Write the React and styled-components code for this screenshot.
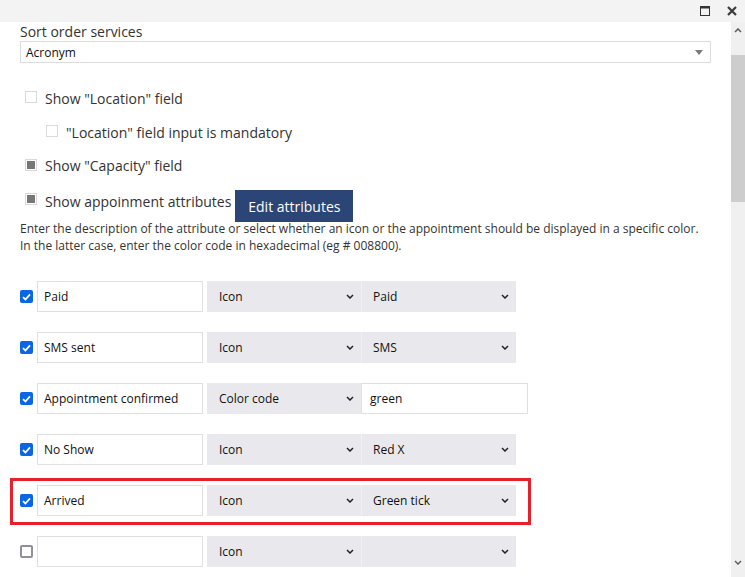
import React from 'react';
import styled, { createGlobalStyle } from 'styled-components';

const GlobalStyle = createGlobalStyle`
  html, body { margin: 0; padding: 0; background: #fff; }
  body { font-family: "Open Sans", "Liberation Sans", sans-serif; }
  * { box-sizing: border-box; }
`;

const Window = styled.div`
  width: 745px;
  height: 577px;
  display: flex;
  flex-direction: column;
  overflow: hidden;
  background: #fff;
`;

const TitleBar = styled.div`
  height: 22px;
  flex-shrink: 0;
  background: #f3f3f3;
  display: flex;
  justify-content: flex-end;
  align-items: center;
  gap: 17px;
  padding-right: 8px;
`;

const WinIcon = styled.svg`
  display: block;
  width: 10px;
  height: 10px;
`;

const Body = styled.div`
  flex: 1;
  min-height: 0;
  display: flex;
`;

const Content = styled.div`
  flex: 1;
  padding: 0 20px;
  overflow: hidden;
  color: #333;
`;

const FieldLabel = styled.div`
  font-size: 14px;
  line-height: 19px;
  color: #333;
`;

const SortSelect = styled.div`
  height: 22px;
  border: 1px solid #dcdcdc;
  display: flex;
  align-items: center;
  justify-content: space-between;
  padding: 0 7px 0 5px;
  font-size: 12px;
  color: #111;
`;

const Triangle = styled.span`
  width: 0;
  height: 0;
  border-left: 4px solid transparent;
  border-right: 4px solid transparent;
  border-top: 5px solid #7a7a7a;
`;

const OptionRow = styled.div`
  display: flex;
  align-items: flex-start;
  margin-top: ${p => p.$top}px;
  padding-left: ${p => p.$indent}px;
`;

const OptionBox = styled.span`
  width: 12px;
  height: 12px;
  flex-shrink: 0;
  margin-top: ${p => p.$offset}px;
  margin-right: 8px;
  border: 1px solid #dadada;
  padding: 1px;
  background: #fff;
  &::after {
    content: "";
    display: ${p => (p.$checked ? 'block' : 'none')};
    width: 100%;
    height: 100%;
    background: #777;
  }
`;

const OptionText = styled.span`
  font-size: 14px;
  line-height: 20px;
  color: #333;
  margin-top: ${p => p.$offset || 0}px;
  white-space: nowrap;
`;

const EditButton = styled.button`
  margin-left: 4px;
  width: 118px;
  height: 32px;
  border: none;
  background: #2b4577;
  color: #fff;
  font-family: inherit;
  font-size: 14px;
  padding: 0;
`;

const Description = styled.p`
  margin: -2px 0 0;
  font-size: 12px;
  line-height: 17px;
  color: #333;
`;

const AttrList = styled.div`
  margin-top: 27px;
  display: flex;
  flex-direction: column;
  gap: 20px;
`;

const AttrRow = styled.div`
  position: relative;
  display: flex;
  align-items: center;
  height: 31px;
  &::after {
    content: "";
    display: ${p => (p.$highlight ? 'block' : 'none')};
    position: absolute;
    left: -10px;
    top: -7px;
    width: 515px;
    bottom: -9px;
    border: 3px solid #e8202a;
    pointer-events: none;
  }
`;

const RowCheck = styled.span`
  width: 13px;
  height: 13px;
  flex-shrink: 0;
  margin-right: 4px;
  border-radius: 2px;
  display: flex;
  align-items: center;
  justify-content: center;
  background: ${p => (p.$checked ? '#0b66e4' : '#fff')};
  border: ${p => (p.$checked ? 'none' : '2px solid #8f8f9d')};
`;

const TextField = styled.div`
  width: ${p => p.$width}px;
  height: 31px;
  border: 1px solid #e0e0e0;
  background: #fff;
  display: flex;
  align-items: center;
  padding-left: ${p => p.$pad}px;
  font-size: 12px;
  color: #111;
`;

const Dropdown = styled.div`
  width: ${p => p.$width}px;
  height: 31px;
  margin-left: ${p => p.$gap}px;
  background: #e9e9ed;
  border-left: ${p => (p.$joined ? '1px solid #f1f1f4' : 'none')};
  display: flex;
  align-items: center;
  justify-content: space-between;
  padding: 0 7px 0 ${p => (p.$joined ? 11 : 12)}px;
  font-size: 12px;
  color: #111;
`;

const Chevron = styled.svg`
  display: block;
  width: 8px;
  height: 5px;
`;

const Scrollbar = styled.div`
  width: 14px;
  flex-shrink: 0;
  background: #f0f0f0;
  display: flex;
  flex-direction: column;
`;

const ScrollArrow = styled.div`
  height: 16px;
  display: flex;
  align-items: center;
  justify-content: center;
`;

const ScrollTrack = styled.div`
  flex: 1;
  padding-top: 17px;
`;

const ScrollThumb = styled.div`
  height: 147px;
  background: #cdcdcd;
`;

const ScrollFoot = styled.div`
  height: 7px;
`;

const DownChevron = ({ color = '#222' }) => (
  <Chevron viewBox="0 0 8 5">
    <polyline points="1,1 4,4 7,1" fill="none" stroke={color} strokeWidth="1.5" />
  </Chevron>
);

const UpChevron = () => (
  <Chevron viewBox="0 0 8 5">
    <polyline points="1,4 4,1 7,4" fill="none" stroke="#606060" strokeWidth="1.6" />
  </Chevron>
);

const Tick = () => (
  <svg width="9" height="8" viewBox="0 0 9 8">
    <polyline points="1,4.2 3.4,6.5 8,1.3" fill="none" stroke="#fff" strokeWidth="1.8" />
  </svg>
);

const attributes = [
  { checked: true, name: 'Paid', kind: 'Icon', value: 'Paid' },
  { checked: true, name: 'SMS sent', kind: 'Icon', value: 'SMS' },
  { checked: true, name: 'Appointment confirmed', kind: 'Color code', value: 'green', text: true },
  { checked: true, name: 'No Show', kind: 'Icon', value: 'Red X' },
  { checked: true, name: 'Arrived', kind: 'Icon', value: 'Green tick', highlight: true },
  { checked: false, name: '', kind: 'Icon', value: '' },
];

export default function App() {
  return (
    <Window>
      <GlobalStyle />
      <TitleBar>
        <WinIcon viewBox="0 0 10 10">
          <rect x="0.5" y="0.5" width="9" height="9" fill="none" stroke="#333" strokeWidth="1" />
          <rect x="0" y="0" width="10" height="2.5" fill="#333" />
        </WinIcon>
        <WinIcon viewBox="0 0 10 10">
          <path d="M1 1 L9 9 M9 1 L1 9" stroke="#3a3a3a" strokeWidth="2.2" />
        </WinIcon>
      </TitleBar>
      <Body>
        <Content>
          <FieldLabel>Sort order services</FieldLabel>
          <SortSelect>
            <span>Acronym</span>
            <Triangle />
          </SortSelect>

          <OptionRow $top={26} $indent={5}>
            <OptionBox $offset={2} />
            <OptionText>Show "Location" field</OptionText>
          </OptionRow>
          <OptionRow $top={14} $indent={26}>
            <OptionBox $offset={2} />
            <OptionText>"Location" field input is mandatory</OptionText>
          </OptionRow>
          <OptionRow $top={13} $indent={5}>
            <OptionBox $offset={3} $checked />
            <OptionText>Show "Capacity" field</OptionText>
          </OptionRow>
          <OptionRow $top={14} $indent={5}>
            <OptionBox $offset={3} $checked />
            <OptionText $offset={2}>Show appoinment attributes</OptionText>
            <EditButton>Edit attributes</EditButton>
          </OptionRow>

          <Description>
            Enter the description of the attribute or select whether an icon or the appointment should be displayed in a specific color.
            <br />
            In the latter case, enter the color code in hexadecimal (eg # 008800).
          </Description>

          <AttrList>
            {attributes.map((a, i) => (
              <AttrRow key={i} $highlight={a.highlight}>
                <RowCheck $checked={a.checked}>{a.checked && <Tick />}</RowCheck>
                <TextField $width={166} $pad={6}>{a.name}</TextField>
                <Dropdown $width={154} $gap={4}>
                  <span>{a.kind}</span>
                  <DownChevron />
                </Dropdown>
                {a.text ? (
                  <TextField $width={167} $pad={8}>{a.value}</TextField>
                ) : (
                  <Dropdown $width={155} $gap={0} $joined>
                    <span>{a.value}</span>
                    <DownChevron />
                  </Dropdown>
                )}
              </AttrRow>
            ))}
          </AttrList>
        </Content>
        <Scrollbar>
          <ScrollArrow><UpChevron /></ScrollArrow>
          <ScrollTrack><ScrollThumb /></ScrollTrack>
          <ScrollArrow><DownChevron color="#606060" /></ScrollArrow>
          <ScrollFoot />
        </Scrollbar>
      </Body>
    </Window>
  );
}
